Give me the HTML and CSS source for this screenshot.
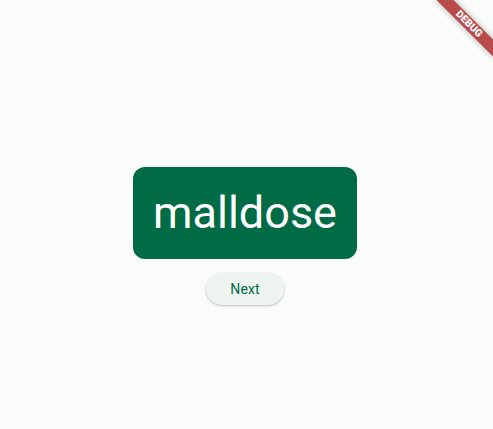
FILE: index.html
```html
<!DOCTYPE html>
<html>
<head>
<meta charset="utf-8">
<link rel="stylesheet" href="styles.css">
</head>
<body>
<main class="screen">
  <div class="content">
    <div class="word-card"><span class="word">malldose</span></div>
    <button class="next-btn">Next</button>
  </div>
</main>
<div class="debug-banner">DEBUG</div>
</body>
</html>
```
FILE: styles.css
```css
html, body {
  margin: 0;
  padding: 0;
  width: 493px;
  height: 429px;
  overflow: hidden;
  background: #f9fcf8;
  font-family: Roboto, "Noto Sans", sans-serif;
}
.screen {
  width: 493px;
  height: 429px;
  display: flex;
  justify-content: center;
}
.content {
  display: flex;
  flex-direction: column;
  align-items: center;
  padding-top: 167px;
  margin-left: -3px;
  gap: 14px;
}
.word-card {
  background: #006b44;
  border-radius: 12px;
  padding: 20px;
}
.word {
  display: block;
  color: #ffffff;
  font-size: 45px;
  line-height: 52px;
  font-weight: 400;
}
.next-btn {
  height: 32px;
  padding: 0 24px;
  border: none;
  border-radius: 16px;
  background: #eef4ef;
  color: #006b44;
  font-family: Roboto, sans-serif;
  font-size: 14px;
  font-weight: 400;
  letter-spacing: 0.1px;
  box-shadow: 0 1px 1.5px rgba(0,0,0,0.18), 0 1px 3px 1px rgba(0,0,0,0.06);
}
.debug-banner {
  position: absolute;
  left: 429px;
  top: 18px;
  width: 80px;
  height: 12px;
  transform: rotate(45deg);
  background: rgba(170, 30, 32, 0.8);
  box-shadow: 0 0 6px rgba(0,0,0,0.3);
  color: #fff;
  font-family: Roboto, sans-serif;
  font-size: 10.2px;
  font-weight: 900;
  line-height: 12px;
  text-align: center;
}
```
